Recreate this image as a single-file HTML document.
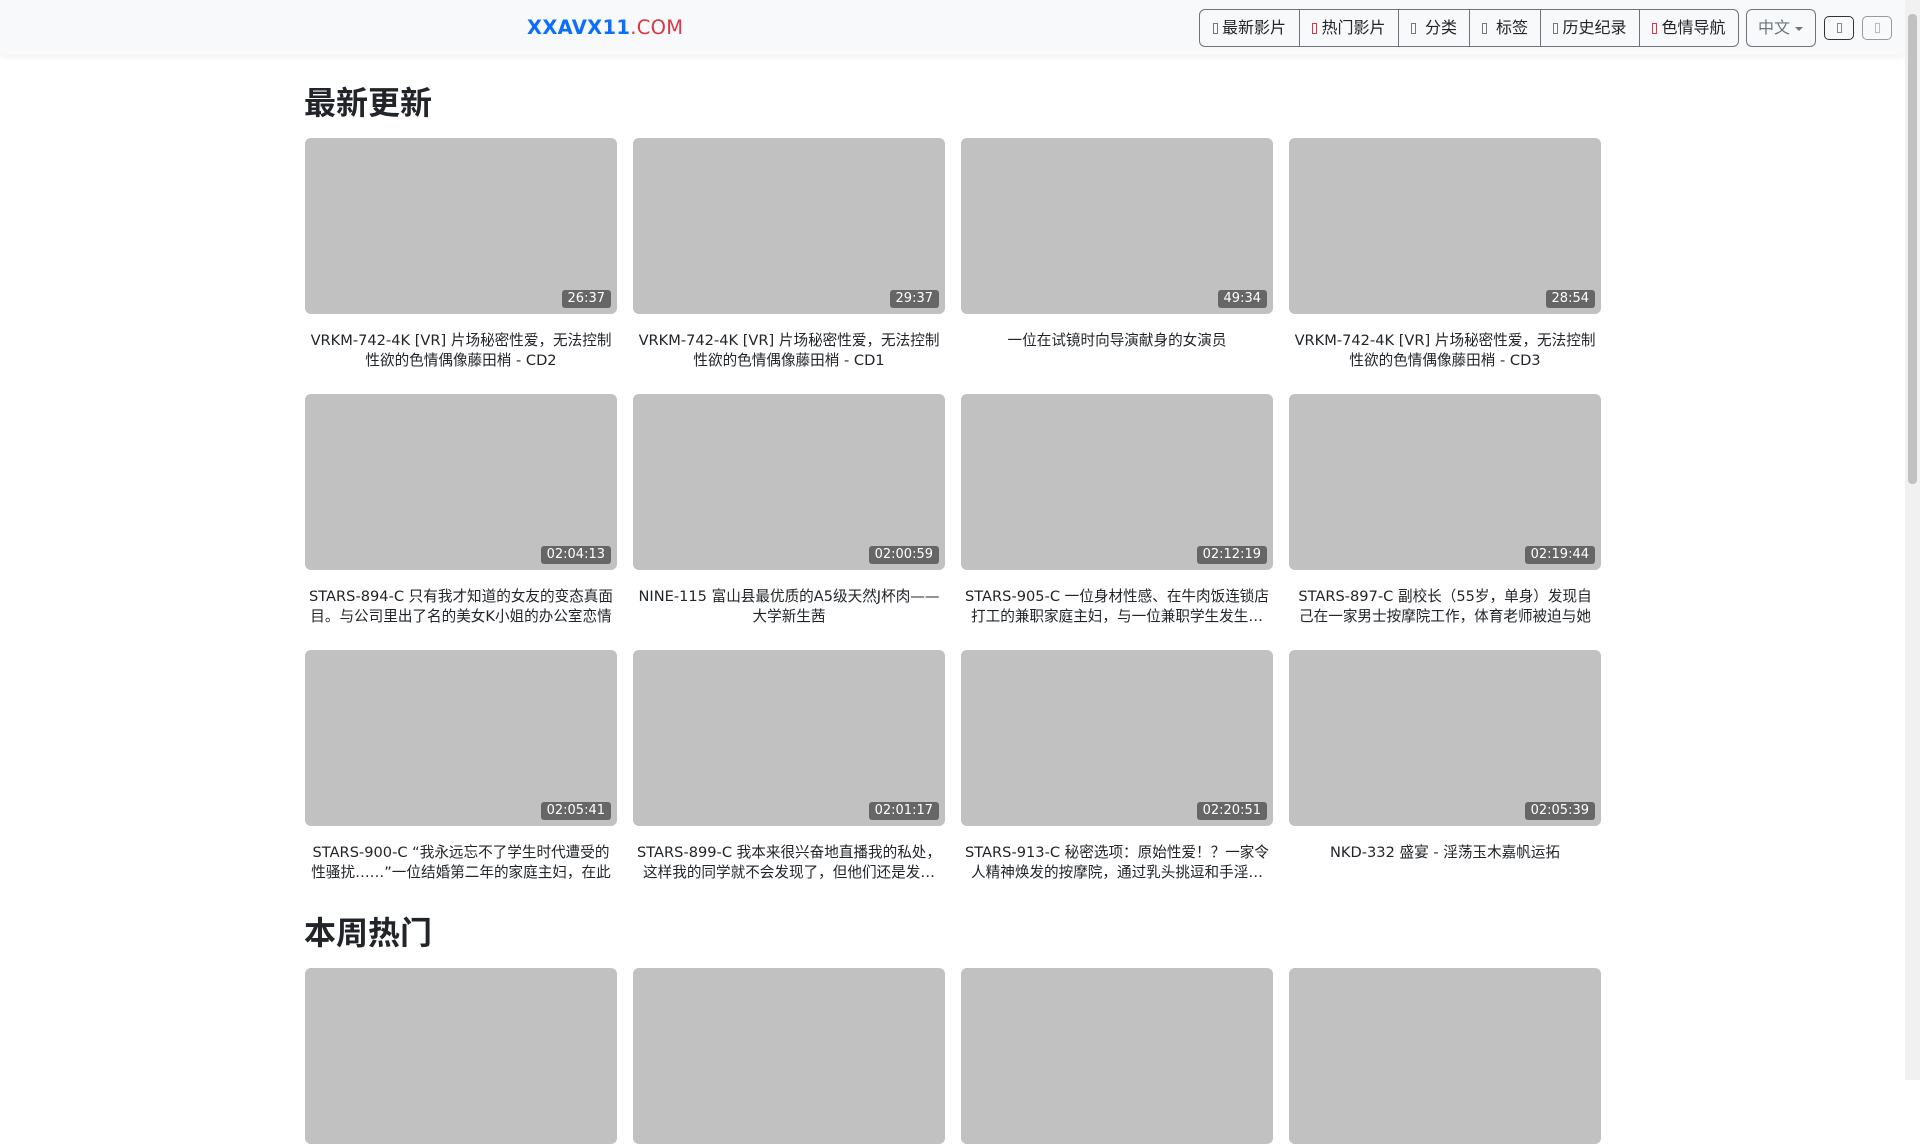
<!DOCTYPE html>
<html><head><meta charset="utf-8"><style>
*{box-sizing:border-box;margin:0;padding:0}
html,body{width:1920px;height:1080px;overflow:hidden;background:#fff;font-family:"DejaVu Sans","Noto Sans CJK SC",sans-serif;color:#212529}
.nav{position:absolute;left:0;top:0;width:1905px;height:55px;background:#f8f9fa;box-shadow:0 2px 6px rgba(0,0,0,.06)}
.logo{position:absolute;left:527px;top:16px;font-size:19.5px;font-weight:bold;color:#0d6efd;letter-spacing:.3px}
.logo span{color:#dc3545;font-weight:normal}
.grp{position:absolute;left:1199px;top:9px;height:38px;display:flex;border:1px solid #6c757d;border-radius:6px;overflow:hidden}
.grp div{height:36px;line-height:36px;font-size:16px;text-align:center;border-left:1px solid #6c757d;color:#212529;white-space:nowrap}
.grp div:first-child{border-left:none}
.ic{display:inline-block;width:5px;height:11px;border:1px solid #777;margin-right:4px;vertical-align:-1px}
.r{border-color:#dc3545}
.lang{position:absolute;left:1746px;top:9px;width:70px;height:38px;border:1px solid #6c757d;border-radius:6px;color:#6c757d;font-size:16px;line-height:36px;padding-left:11px}
.lang:after{content:"";position:absolute;right:12px;top:17px;border:4px solid transparent;border-top-color:#6c757d}
.sb{position:absolute;top:16px;width:30px;height:24px;border:1px solid #333;border-radius:5px}
.sb i{position:absolute;left:12px;top:6px;width:5px;height:10px;border:1px solid #888}
.scroll{position:absolute;left:1905px;top:0;width:15px;height:1080px;background:#f1f1f1}
.scroll div{position:absolute;left:3px;top:14px;width:9px;height:470px;background:#c1c1c1;border-radius:4px}
h2{position:absolute;left:304px;font-size:32px;line-height:40px;font-weight:bold;color:#212529}
.card{position:absolute;width:312px}
.th{height:176px;background:#c1c1c1;border-radius:6px;position:relative}
.d{position:absolute;right:6px;bottom:6px;background:#666;color:#fff;font-size:13px;line-height:18px;padding:0 6px;border-radius:3px}
.t{margin-top:17px;font-size:14.6px;line-height:20px;text-align:center;padding:0 4px;display:-webkit-box;-webkit-line-clamp:2;-webkit-box-orient:vertical;overflow:hidden}
</style></head><body>
<div class="nav">
<div class="logo">XXAVX11<span>.COM</span></div>
<div class="grp">
<div style="width:99px"><i class="ic"></i>最新影片</div>
<div style="width:99px"><i class="ic r"></i>热门影片</div>
<div style="width:71px"><i class="ic"></i> 分类</div>
<div style="width:71px"><i class="ic"></i> 标签</div>
<div style="width:99px"><i class="ic"></i>历史纪录</div>
<div style="width:99px"><i class="ic r"></i>色情导航</div>
</div>
<div class="lang">中文</div>
<div class="sb" style="left:1824px"><i></i></div>
<div class="sb" style="left:1862px;border-color:#999"><i style="border-color:#bbb"></i></div>
</div>
<div class="scroll"><div></div></div>
<h2 style="top:83px">最新更新</h2>
<div class="card" style="left:305px;top:138px"><div class="th"><span class="d">26:37</span></div><div class="t">VRKM-742-4K [VR] 片场秘密性爱，无法控制性欲的色情偶像藤田梢 - CD2</div></div>
<div class="card" style="left:633px;top:138px"><div class="th"><span class="d">29:37</span></div><div class="t">VRKM-742-4K [VR] 片场秘密性爱，无法控制性欲的色情偶像藤田梢 - CD1</div></div>
<div class="card" style="left:961px;top:138px"><div class="th"><span class="d">49:34</span></div><div class="t">一位在试镜时向导演献身的女演员</div></div>
<div class="card" style="left:1289px;top:138px"><div class="th"><span class="d">28:54</span></div><div class="t">VRKM-742-4K [VR] 片场秘密性爱，无法控制性欲的色情偶像藤田梢 - CD3</div></div>
<div class="card" style="left:305px;top:394px"><div class="th"><span class="d">02:04:13</span></div><div class="t">STARS-894-C 只有我才知道的女友的变态真面目。与公司里出了名的美女K小姐的办公室恋情</div></div>
<div class="card" style="left:633px;top:394px"><div class="th"><span class="d">02:00:59</span></div><div class="t">NINE-115 富山县最优质的A5级天然J杯肉——大学新生茜</div></div>
<div class="card" style="left:961px;top:394px"><div class="th"><span class="d">02:12:19</span></div><div class="t">STARS-905-C 一位身材性感、在牛肉饭连锁店打工的兼职家庭主妇，与一位兼职学生发生关系</div></div>
<div class="card" style="left:1289px;top:394px"><div class="th"><span class="d">02:19:44</span></div><div class="t">STARS-897-C 副校长（55岁，单身）发现自己在一家男士按摩院工作，体育老师被迫与她</div></div>
<div class="card" style="left:305px;top:650px"><div class="th"><span class="d">02:05:41</span></div><div class="t">STARS-900-C “我永远忘不了学生时代遭受的性骚扰……”一位结婚第二年的家庭主妇，在此</div></div>
<div class="card" style="left:633px;top:650px"><div class="th"><span class="d">02:01:17</span></div><div class="t">STARS-899-C 我本来很兴奋地直播我的私处，这样我的同学就不会发现了，但他们还是发现了</div></div>
<div class="card" style="left:961px;top:650px"><div class="th"><span class="d">02:20:51</span></div><div class="t">STARS-913-C 秘密选项：原始性爱！？一家令人精神焕发的按摩院，通过乳头挑逗和手淫服务</div></div>
<div class="card" style="left:1289px;top:650px"><div class="th"><span class="d">02:05:39</span></div><div class="t">NKD-332 盛宴 - 淫荡玉木嘉帆运拓</div></div>
<h2 style="top:913px">本周热门</h2>
<div class="card" style="left:305px;top:968px"><div class="th"></div></div>
<div class="card" style="left:633px;top:968px"><div class="th"></div></div>
<div class="card" style="left:961px;top:968px"><div class="th"></div></div>
<div class="card" style="left:1289px;top:968px"><div class="th"></div></div>
</body></html>
